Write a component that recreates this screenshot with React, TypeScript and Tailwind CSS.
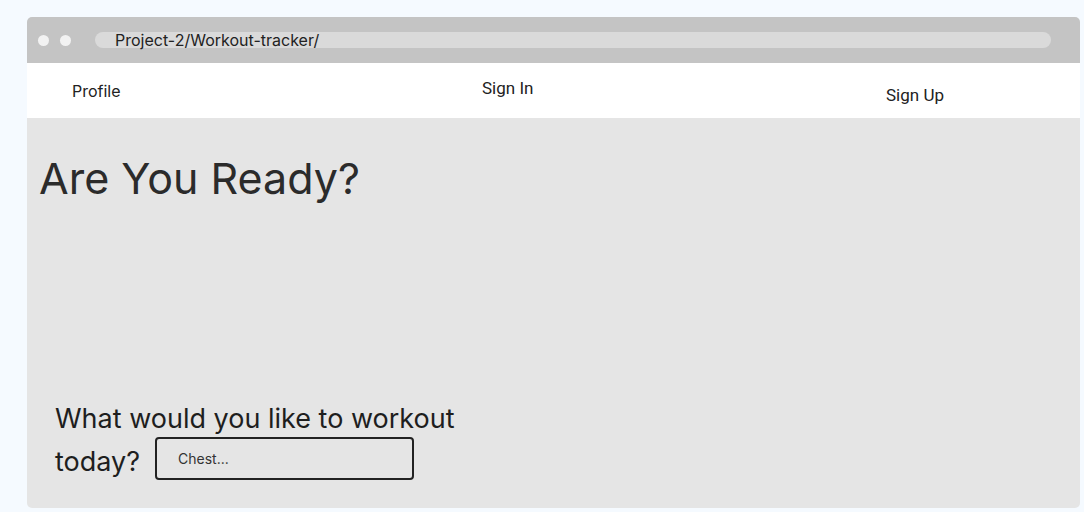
import React from "react";

const NavLinks = () => {
    return (
        <div className="h-[55px] bg-white flex text-[#222]">
            <div className="w-[455px] pl-[45px] flex items-center pt-[1px] text-[16px] font-['Inter',sans-serif]">
                Profile
            </div>
            <div className="w-[404px] flex items-center pb-[3px] text-[17px] font-['Roboto',sans-serif]">
                Sign In
            </div>
            <div className="flex items-center pt-[11px] text-[17px] font-['Roboto',sans-serif]">
                Sign Up
            </div>
        </div>
    );
};

export default function App() {
    return (
        <div className="w-[1084px] h-[512px] bg-[#f5faff] pt-[17px] pl-[27px] pr-[4px] pb-[4px] flex flex-col font-['Inter',sans-serif]">
            <div className="flex-1 flex flex-col rounded-[5px] overflow-hidden">
                {/* browser bar */}
                <div className="h-[46px] bg-[#c4c4c4] flex items-center pl-[11px] pr-[29px] gap-[11px]">
                    <div className="w-[11px] h-[11px] rounded-full bg-[#f2f2f2]" />
                    <div className="w-[11px] h-[11px] rounded-full bg-[#f2f2f2]" />
                    <div className="flex-1 ml-[13px] h-[16px] rounded-full bg-[#dadada] flex items-center pl-[20px] text-[16px] text-[#222]">
                        Project-2/Workout-tracker/
                    </div>
                </div>
                <NavLinks />
                {/* main */}
                <div className="flex-1 bg-[#e5e5e5] flex flex-col">
                    <h1 className="mt-[33px] ml-[12px] text-[43px] leading-[54px] text-[#2b2b2b]">
                        Are You Ready?
                    </h1>
                    <div className="mt-auto mb-[28px] ml-[28px] text-[27px] text-[#1e1e1e]">
                        <div className="leading-[34px]">What would you like to workout</div>
                        <div className="flex items-center gap-[15px] mt-[1px]">
                            <span className="leading-[34px] pt-[6px]">today?</span>
                            <div className="w-[259px] h-[43px] border-2 border-[#222] rounded-[4px] flex items-center pl-[21px] text-[14px] text-[#333]">
                                Chest...
                            </div>
                        </div>
                    </div>
                </div>
            </div>
        </div>
    );
}
